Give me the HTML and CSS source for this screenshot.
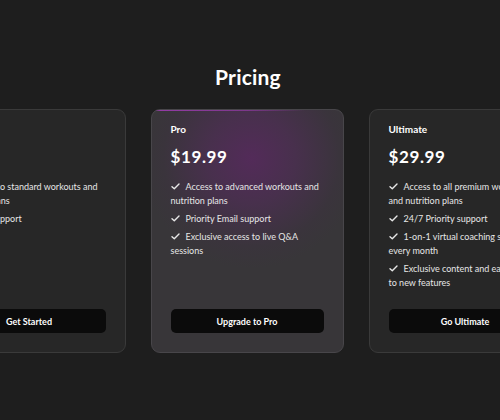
FILE: index.html
```html
<!DOCTYPE html>
<html>
<head>
<meta charset="utf-8">
<link rel="stylesheet" href="styles.css">
</head>
<body>
<section class="pricing">
  <h1 class="title">Pricing</h1>
  <div class="cards">
    <div class="card">
      <div class="plan">Basic</div>
      <div class="price">$9.99</div>
      <ul class="features">
        <li><svg class="check" viewBox="0 0 10 8"><path d="M1 4.2 L3.6 6.6 L9 1.2" /></svg>Access to standard workouts and nutrition plans</li>
        <li><svg class="check" viewBox="0 0 10 8"><path d="M1 4.2 L3.6 6.6 L9 1.2" /></svg>Email support</li>
      </ul>
      <button class="btn">Get Started</button>
    </div>
    <div class="card featured">
      <div class="plan">Pro</div>
      <div class="price">$19.99</div>
      <ul class="features">
        <li><svg class="check" viewBox="0 0 10 8"><path d="M1 4.2 L3.6 6.6 L9 1.2" /></svg>Access to advanced workouts and nutrition plans</li>
        <li><svg class="check" viewBox="0 0 10 8"><path d="M1 4.2 L3.6 6.6 L9 1.2" /></svg>Priority Email support</li>
        <li><svg class="check" viewBox="0 0 10 8"><path d="M1 4.2 L3.6 6.6 L9 1.2" /></svg>Exclusive access to live Q&amp;A sessions</li>
      </ul>
      <button class="btn">Upgrade to Pro</button>
    </div>
    <div class="card">
      <div class="plan">Ultimate</div>
      <div class="price">$29.99</div>
      <ul class="features">
        <li><svg class="check" viewBox="0 0 10 8"><path d="M1 4.2 L3.6 6.6 L9 1.2" /></svg>Access to all premium workouts and nutrition plans</li>
        <li><svg class="check" viewBox="0 0 10 8"><path d="M1 4.2 L3.6 6.6 L9 1.2" /></svg>24/7 Priority support</li>
        <li><svg class="check" viewBox="0 0 10 8"><path d="M1 4.2 L3.6 6.6 L9 1.2" /></svg>1-on-1 virtual coaching sessions every month</li>
        <li><svg class="check" viewBox="0 0 10 8"><path d="M1 4.2 L3.6 6.6 L9 1.2" /></svg>Exclusive content and early access to new features</li>
      </ul>
      <button class="btn">Go Ultimate</button>
    </div>
  </div>
</section>
</body>
</html>
```
FILE: styles.css
```css
html, body {
  margin: 0;
  padding: 0;
  width: 500px;
  height: 420px;
  overflow: hidden;
  background: #1e1e1e;
  font-family: Lato, "Noto Sans", sans-serif;
  color: #f2f2f2;
}
.pricing {
  padding-top: 64px;
  display: flex;
  flex-direction: column;
  align-items: center;
}
.title {
  margin: 0;
  font-size: 21px;
  font-weight: 700;
  line-height: 26px;
  color: #ffffff;
  letter-spacing: 0.2px;
  transform: translateX(-2px);
}
.cards {
  margin-top: 19px;
  margin-left: -6px;
  display: flex;
  justify-content: center;
  gap: 25px;
  width: 500px;
}
.card {
  flex: 0 0 193px;
  box-sizing: border-box;
  height: 244px;
  padding: 12px 19px 19px 19px;
  border: 1px solid #3a3a3a;
  border-radius: 9px;
  background: #272727;
  display: flex;
  flex-direction: column;
}
.card.featured {
  border-color: #48464a;
  background:
    linear-gradient(90deg, rgba(160,60,180,0.9) 0%, rgba(160,60,180,0.6) 50%, rgba(160,60,180,0) 80%) top / 100% 1px no-repeat,
    radial-gradient(ellipse 110px 110px at 52% 20%, #532b59 0%, #48304d 40%, #3a343c 80%, #383639 100%);
}
.plan {
  font-size: 10px;
  font-weight: 700;
  line-height: 14px;
  color: #ffffff;
}
.price {
  margin-top: 10px;
  font-size: 17px;
  font-weight: 700;
  line-height: 22px;
  letter-spacing: 0.6px;
  color: #ffffff;
}
.features {
  list-style: none;
  margin: 12px 0 0 0;
  padding: 0;
  display: flex;
  flex-direction: column;
  gap: 4px;
}
.features li {
  font-size: 9px;
  line-height: 14px;
  color: #e6e6e6;
}
.check {
  width: 9px;
  height: 7px;
  margin-right: 6px;
  vertical-align: 0px;
}
.check path {
  fill: none;
  stroke: #e8e8e8;
  stroke-width: 1.6;
  stroke-linecap: round;
  stroke-linejoin: round;
}
.btn {
  margin-top: auto;
  height: 24px;
  border: none;
  border-radius: 5px;
  background: #0b0b0b;
  color: #ffffff;
  font-family: Lato, "Noto Sans", sans-serif;
  font-size: 9px;
  font-weight: 700;
  cursor: pointer;
}
```
